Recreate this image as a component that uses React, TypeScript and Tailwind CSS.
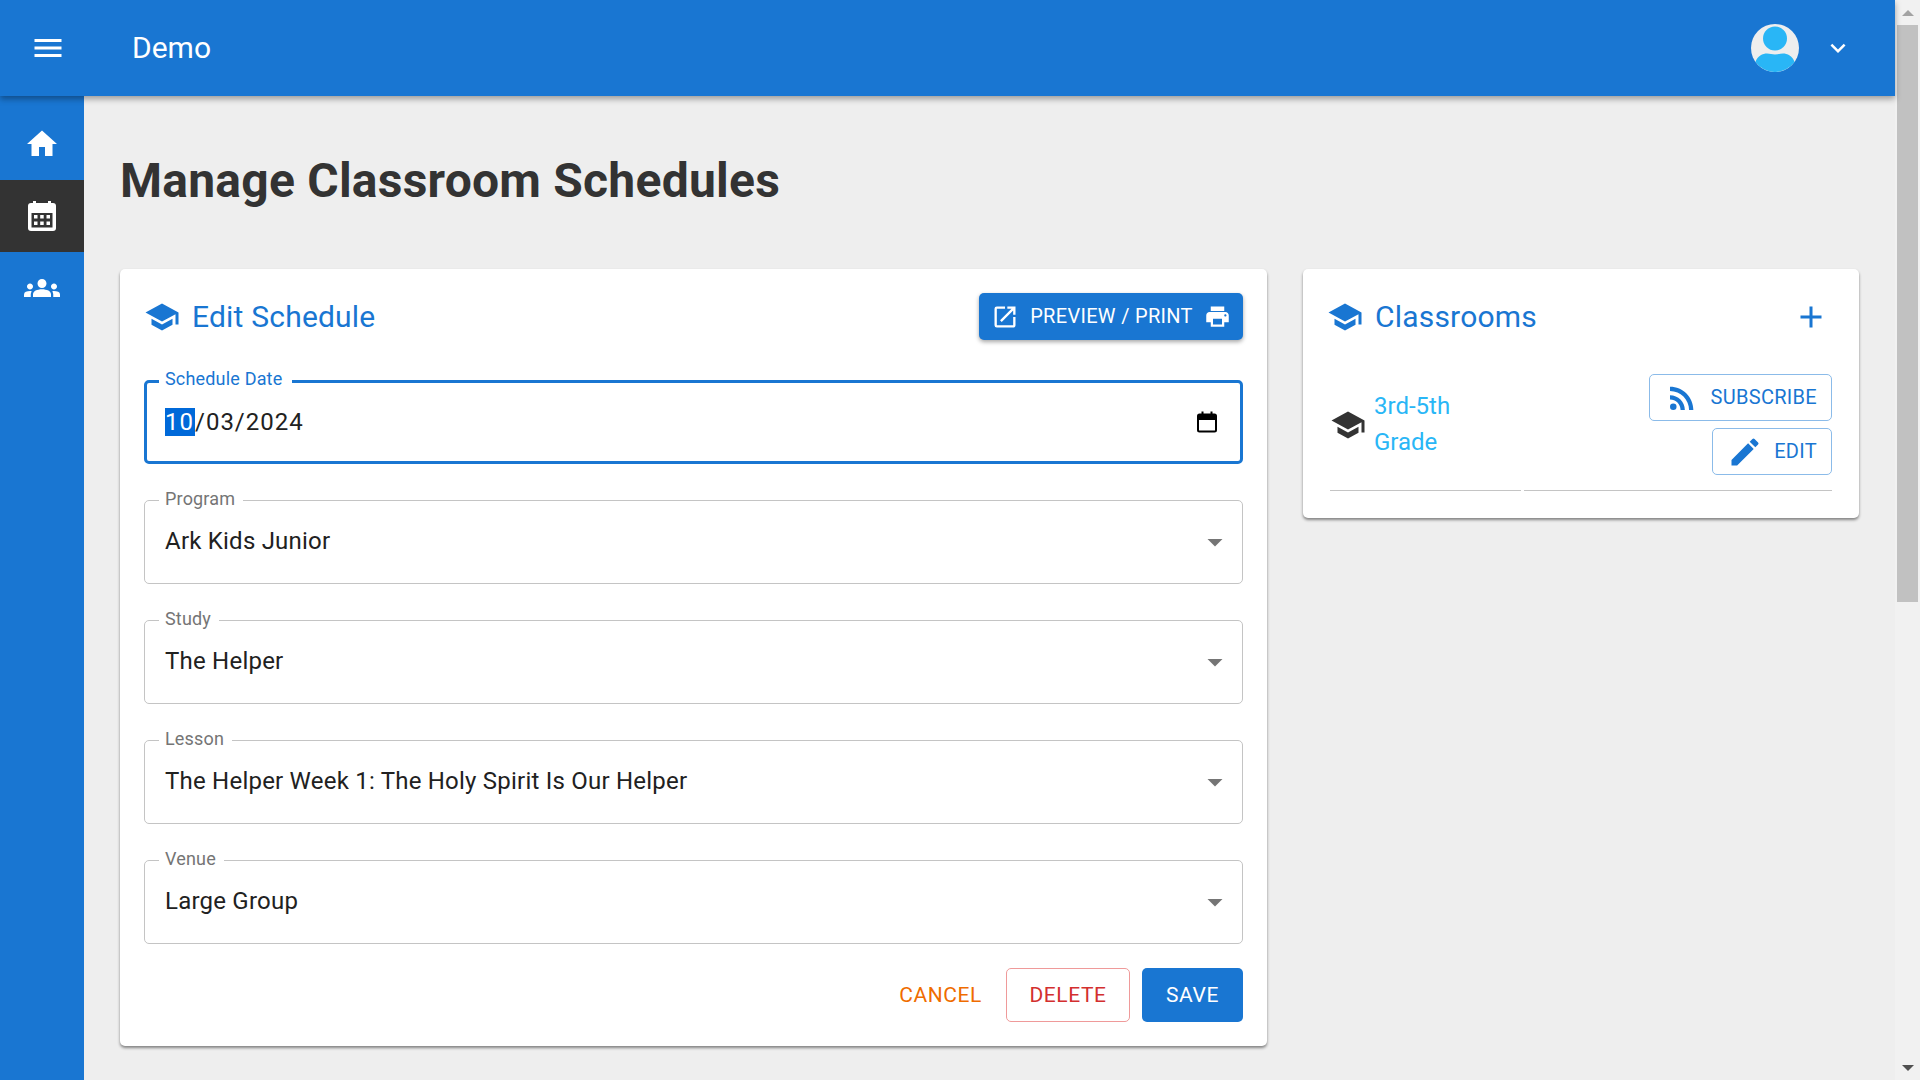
import { ReactNode } from "react";
import {
  MdAdd,
  MdArrowDropDown,
  MdEdit,
  MdExpandMore,
  MdGroups,
  MdHome,
  MdMenu,
  MdOpenInNew,
  MdPrint,
  MdRssFeed,
  MdSchool,
} from "react-icons/md";

const Field = ({ label, value }: { label: string; value: string }) => (
  <div className="relative h-[84px] rounded-[5px] border border-[#c4c4c4] flex items-center justify-between pl-[20px] pr-[9px]">
    <span className="absolute left-[14px] top-[-14px] bg-white pl-[6px] pr-[8px] text-[18px] leading-[24px] tracking-[0.18px] text-[#757575]">
      {label}
    </span>
    <span className="pb-[2px] text-[24px] tracking-[0.22px] text-[#212121]">{value}</span>
    <MdArrowDropDown className="text-[36px] text-[#757575]" />
  </div>
);

const CardTitle = ({ children, action }: { children: ReactNode; action: ReactNode }) => (
  <div className="flex items-center justify-between">
    <div className="flex items-center gap-[12px] text-[#1976d2]">
      <MdSchool className="text-[36px]" />
      <h2 className="text-[30px] leading-[47px] tracking-[0.2px]">{children}</h2>
    </div>
    {action}
  </div>
);

const EditSchedule = () => (
  <section className="w-[1147px] h-[777px] rounded-[5px] bg-white shadow-[0_2px_3px_rgba(0,0,0,0.45)] px-[24px] pt-[24px]">
    <CardTitle
      action={
        <button className="h-[47px] w-[264px] rounded-[5px] bg-[#1976d2] flex items-center justify-between pl-[12px] pr-[12px] text-white text-[20px] tracking-[0.3px] shadow-[0_2px_4px_rgba(0,0,0,0.35)]">
          <MdOpenInNew className="text-[28px]" />
          <span className="pb-[2px]">PREVIEW / PRINT</span>
          <MdPrint className="text-[27px]" />
        </button>
      }
    >
      Edit Schedule
    </CardTitle>

    <div className="mt-[40px] flex flex-col gap-[36px]">
      <div className="relative h-[84px] rounded-[5px] border-[3px] border-[#1976d2] flex items-center justify-between pl-[18px] pr-[21px]">
        <span className="absolute left-[12px] top-[-16px] bg-white pl-[6px] pr-[10px] text-[18px] leading-[24px] tracking-[0.18px] text-[#1976d2]">
          Schedule Date
        </span>
        <span className="text-[24px] tracking-[1px] text-[#212121]">
          <span className="bg-[#0069d9] text-white pr-[1px]">10</span>/03/2024
        </span>
        <svg viewBox="0 0 24 24" className="w-[24px] h-[24px]" fill="none" stroke="#000" strokeWidth="2">
          <rect x="3" y="4.5" width="18" height="17" rx="1.5" />
          <path d="M3 7.5h18" strokeWidth="5" />
          <path d="M7.5 1.5v3M16.5 1.5v3" />
        </svg>
      </div>
      <Field label="Program" value="Ark Kids Junior" />
      <Field label="Study" value="The Helper" />
      <Field label="Lesson" value="The Helper Week 1: The Holy Spirit Is Our Helper" />
      <Field label="Venue" value="Large Group" />
    </div>

    <div className="mt-[24px] flex items-center justify-end text-[21px] tracking-[0.6px]">
      <button className="text-[#ef6c00] mr-[24px] pt-[2px]">CANCEL</button>
      <button className="h-[54px] w-[124px] rounded-[5px] border border-[#ef9a9a] text-[#d32f2f] mr-[12px] pt-[2px]">DELETE</button>
      <button className="h-[54px] w-[101px] rounded-[5px] bg-[#1976d2] text-white pt-[2px]">SAVE</button>
    </div>
  </section>
);

const Classrooms = () => (
  <section className="w-[556px] h-[249px] rounded-[5px] bg-white shadow-[0_2px_3px_rgba(0,0,0,0.45)] px-[24px] pt-[24px]">
    <CardTitle action={<MdAdd className="text-[36px] text-[#1976d2] mr-[6px]" />}>Classrooms</CardTitle>
    <div className="mx-[3px]">
      <div className="mt-[34px] flex items-center justify-between">
        <div className="flex items-center gap-[8px]">
          <MdSchool className="text-[36px] text-[#333333]" />
          <div className="pb-[2px] text-[24px] leading-[36px] text-[#29b6f6]">
            3rd-5th
            <br />
            Grade
          </div>
        </div>
        <div className="flex flex-col items-end gap-[7px]">
          <button className="h-[47px] w-[183px] rounded-[5px] border border-[#8bbbe9] flex items-center justify-between pl-[14px] pr-[14px] text-[#1976d2] text-[20px] tracking-[0.3px]">
            <MdRssFeed className="text-[36px]" />
            <span className="pb-[2px]">SUBSCRIBE</span>
          </button>
          <button className="h-[47px] w-[120px] rounded-[5px] border border-[#8bbbe9] flex items-center justify-between pl-[14px] pr-[14px] text-[#1976d2] text-[20px] tracking-[0.3px]">
            <MdEdit className="text-[36px]" />
            <span className="pb-[2px]">EDIT</span>
          </button>
        </div>
      </div>
      <div className="mt-[15px] flex gap-[3px]">
        <div className="h-px w-[191px] bg-[#c4c4c4]" />
        <div className="h-px flex-1 bg-[#c4c4c4]" />
      </div>
    </div>
  </section>
);

const Scrollbar = () => (
  <div className="w-[25px] h-full bg-[#f1f1f1] flex flex-col items-center">
    <div className="h-[25px] w-full flex items-center justify-center">
      <div className="h-0 w-0 border-x-[6px] border-b-[6px] border-x-transparent border-b-[#a3a3a3]" />
    </div>
    <div className="h-[577px] w-[21px] bg-[#c1c1c1]" />
    <div className="flex-1" />
    <div className="h-[25px] w-full flex items-center justify-center">
      <div className="h-0 w-0 border-x-[6px] border-t-[6px] border-x-transparent border-t-[#505050]" />
    </div>
  </div>
);

export default function App() {
  return (
    <div className="h-screen w-full flex overflow-hidden bg-[#eeeeee] font-['Roboto',sans-serif]">
      <div className="flex-1 min-w-0 flex flex-col">
        <header className="relative z-10 h-[96px] shrink-0 bg-[#1976d2] shadow-[0_3px_6px_rgba(0,0,0,0.35)] flex items-center text-white">
          <MdMenu className="ml-[30px] text-[36px]" />
          <span className="ml-[66px] pb-[2px] text-[30px] font-normal">Demo</span>
          <div className="ml-auto flex items-center mr-[42px]">
            <svg viewBox="0 0 48 48" className="w-[48px] h-[48px]">
              <circle cx="24" cy="24" r="24" fill="#eeeeee" />
              <circle cx="24" cy="14.5" r="12" fill="#29b6f6" />
              <path d="M4.5 38C6 32 12 29.5 16 29.5c3 0 5 1 8 1s5-1 8-1c4 0 10 2.5 11.5 8.5A24 24 0 0 1 4.5 38Z" fill="#29b6f6" />
            </svg>
            <MdExpandMore className="ml-[24px] text-[30px]" />
          </div>
        </header>
        <div className="flex-1 flex min-h-0">
          <nav className="w-[84px] shrink-0 bg-[#1976d2] flex flex-col text-white">
            <div className="h-[84px] pt-[11px] flex items-center justify-center">
              <MdHome className="text-[36px]" />
            </div>
            <div className="h-[72px] bg-[#333333] flex items-center justify-center">
              <svg viewBox="0 0 28 30" className="w-[28px] h-[30px]">
                <rect x="5" y="0" width="3" height="4" fill="#ffffff" />
                <rect x="20" y="0" width="3" height="4" fill="#ffffff" />
                <rect x="0" y="2" width="28" height="28" rx="3" fill="#ffffff" />
                <rect x="3.5" y="12" width="21" height="14.5" fill="#333333" />
                <rect x="6" y="14" width="3.5" height="3.5" fill="#ffffff" />
                <rect x="12.2" y="14" width="3.5" height="3.5" fill="#ffffff" />
                <rect x="18.5" y="14" width="3.5" height="3.5" fill="#ffffff" />
                <rect x="6" y="20.5" width="3.5" height="3.5" fill="#ffffff" />
                <rect x="12.2" y="20.5" width="3.5" height="3.5" fill="#ffffff" />
                <rect x="18.5" y="20.5" width="3.5" height="3.5" fill="#ffffff" />
              </svg>
            </div>
            <div className="h-[72px] flex items-center justify-center">
              <MdGroups className="text-[36px]" />
            </div>
          </nav>
          <main className="flex-1 min-w-0 pl-[36px] pt-[55px]">
            <h1 className="text-[48px] leading-[60px] font-bold tracking-[0.24px] text-[#333333]">Manage Classroom Schedules</h1>
            <div className="mt-[58px] flex items-start gap-[36px]">
              <EditSchedule />
              <Classrooms />
            </div>
          </main>
        </div>
      </div>
      <Scrollbar />
    </div>
  );
}
